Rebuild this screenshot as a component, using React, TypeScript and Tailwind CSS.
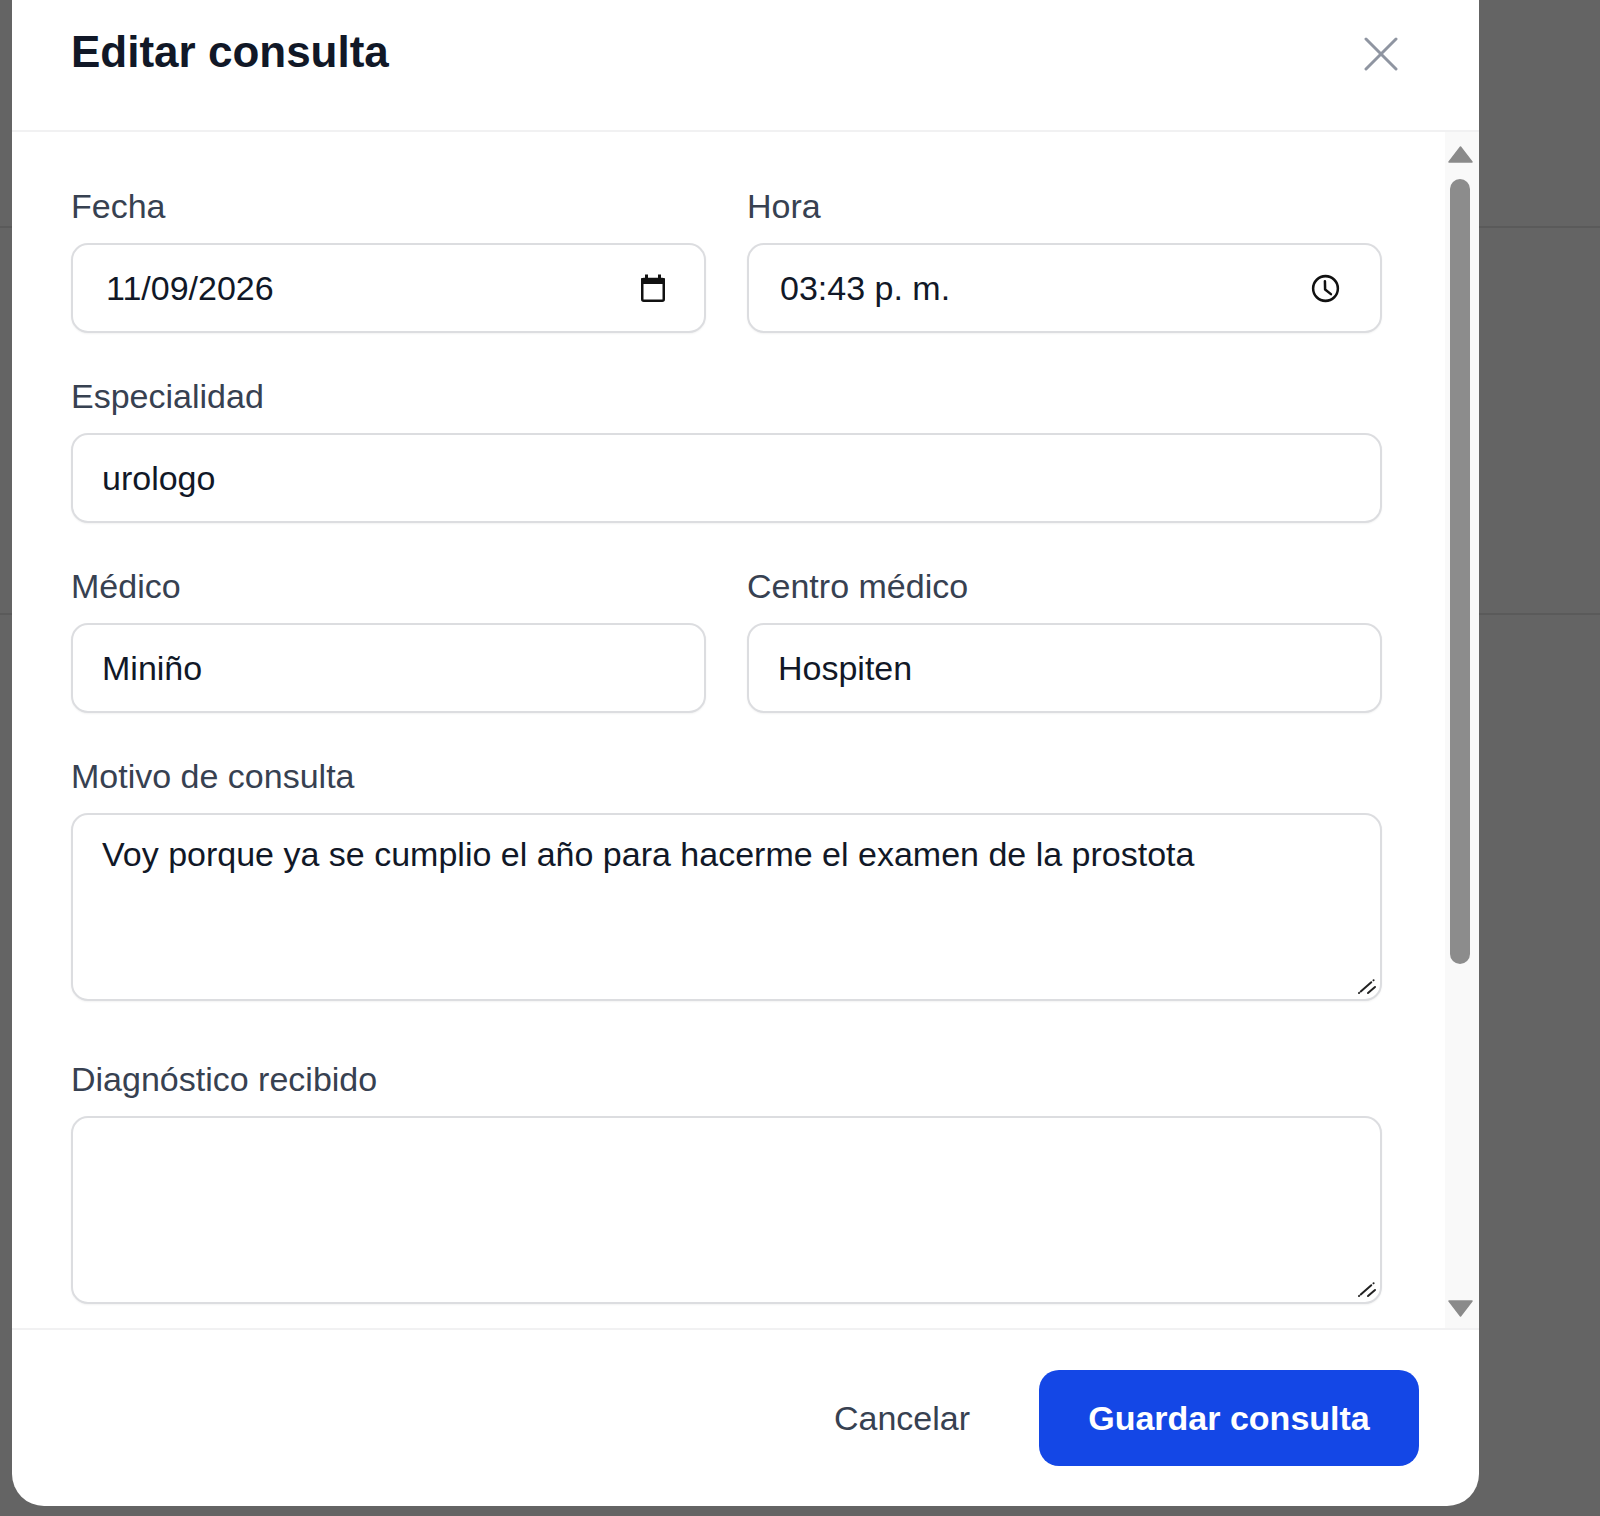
import React from "react";

const inputBase =
  "h-[90px] w-full rounded-[17px] border-2 border-[#dcdde0] bg-white text-[34px] text-[#111827] outline-none shadow-[0_1px_2px_rgba(0,0,0,0.05)]";

function Field({
  label,
  children,
  className = "",
}: {
  label: string;
  children: React.ReactNode;
  className?: string;
}) {
  return (
    <div className={"flex flex-col gap-[17px] " + className}>
      <label className="h-[40px] text-[34px] leading-[40px] text-[#374151]">{label}</label>
      {children}
    </div>
  );
}

function CalendarIcon() {
  return (
    <svg width="24" height="28" viewBox="0 0 24 28" className="shrink-0">
      <rect x="1.25" y="5" width="21.5" height="21.75" rx="1.5" fill="none" stroke="#111" strokeWidth="2.5" />
      <rect x="0" y="4" width="24" height="6" rx="1" fill="#111" />
      <rect x="4" y="0.5" width="3" height="5" fill="#111" />
      <rect x="17" y="0.5" width="3" height="5" fill="#111" />
    </svg>
  );
}

function ClockIcon() {
  return (
    <svg width="29" height="29" viewBox="0 0 30 30" className="shrink-0">
      <circle cx="15" cy="15" r="12.8" fill="none" stroke="#111" strokeWidth="2.6" />
      <polyline
        points="14.4,7.5 14.6,16 20.6,20.8"
        fill="none"
        stroke="#111"
        strokeWidth="2.6"
        strokeLinecap="round"
        strokeLinejoin="round"
      />
    </svg>
  );
}

function Grip() {
  return (
    <svg width="20" height="18" viewBox="0 0 20 18" className="pointer-events-none absolute bottom-[6px] right-[5px]">
      <line x1="2" y1="16" x2="18" y2="2" stroke="#222" strokeWidth="2" strokeLinecap="round" strokeDasharray="0.1 2.2 14 3" />
      <line x1="11" y1="16" x2="18" y2="10" stroke="#222" strokeWidth="2" strokeLinecap="round" />
    </svg>
  );
}

function TextArea({ value }: { value: string }) {
  return (
    <div className="relative">
      <textarea
        readOnly
        defaultValue={value}
        className="block h-[188px] w-full resize-none rounded-[17px] border-2 border-[#dcdde0] bg-white px-[29px] pt-[17px] text-[34px] leading-[44px] text-[#111827] outline-none shadow-[0_1px_2px_rgba(0,0,0,0.05)]"
      />
      <Grip />
    </div>
  );
}

export default function App() {
  return (
    <div className="relative h-[1516px] w-full overflow-hidden bg-[#646464] font-['Liberation_Sans',Arial,sans-serif]">
      {/* underlying dimmed page */}
      <div className="h-[228px] border-b-2 border-[#5a5a5a]" />
      <div className="h-[387px] border-b-2 border-[#5a5a5a]" />

      {/* modal */}
      <div className="absolute left-[12px] top-0 flex h-[1506px] w-[1467px] flex-col overflow-hidden rounded-b-[32px] bg-white">
        {/* header */}
        <div className="flex h-[132px] shrink-0 items-start justify-between border-b-2 border-[#f1f1f2] pl-[59px] pr-[81px] pt-[30px]">
          <h2 className="text-[44px] font-bold leading-[44px] text-[#111827]">Editar consulta</h2>
          <button className="mt-[7px] h-[34px] w-[34px]" aria-label="Cerrar">
            <svg width="34" height="34" viewBox="0 0 34 34">
              <line x1="2" y1="2" x2="32" y2="32" stroke="#8f95a1" strokeWidth="3" strokeLinecap="round" />
              <line x1="32" y1="2" x2="2" y2="32" stroke="#8f95a1" strokeWidth="3" strokeLinecap="round" />
            </svg>
          </button>
        </div>

        {/* body */}
        <div className="flex h-[1196px] shrink-0 overflow-hidden">
          <div className="flex flex-1 flex-col gap-[43px] pl-[59px] pr-[63px] pt-[54px]">
            <div className="grid grid-cols-2 gap-x-[41px]">
              <Field label="Fecha">
                <div className={inputBase + " flex items-center pl-[33px] pr-[39px]"}>
                  <span className="leading-[40px]">11/09/2026</span>
                  <span className="ml-auto flex">
                    <CalendarIcon />
                  </span>
                </div>
              </Field>
              <Field label="Hora">
                <div className={inputBase + " flex items-center pl-[31px] pr-[40px]"}>
                  <span className="leading-[40px]">03:43 p. m.</span>
                  <span className="ml-auto flex">
                    <ClockIcon />
                  </span>
                </div>
              </Field>
            </div>

            <Field label="Especialidad">
              <input readOnly defaultValue="urologo" className={inputBase + " px-[29px]"} />
            </Field>

            <div className="grid grid-cols-2 gap-x-[41px]">
              <Field label="Médico">
                <input readOnly defaultValue="Miniño" className={inputBase + " px-[29px]"} />
              </Field>
              <Field label="Centro médico">
                <input readOnly defaultValue="Hospiten" className={inputBase + " px-[29px]"} />
              </Field>
            </div>

            <Field label="Motivo de consulta">
              <TextArea value="Voy porque ya se cumplio el año para hacerme el examen de la prostota" />
            </Field>

            <Field label="Diagnóstico recibido" className="mt-[15px]">
              <TextArea value="" />
            </Field>
          </div>

          {/* scrollbar */}
          <div className="flex w-[34px] shrink-0 flex-col bg-[#f9f9f9]">
            <svg width="25" height="17" viewBox="0 0 25 17" className="ml-[3px] mt-[14px] shrink-0">
              <polygon points="12.5,1 24,16 1,16" fill="#8a8a8a" stroke="#8a8a8a" strokeWidth="1.5" strokeLinejoin="round" />
            </svg>
            <div className="ml-[5px] mt-[16px] h-[785px] w-[20px] shrink-0 rounded-full bg-[#8c8c8c]" />
            <div className="flex-1" />
            <svg width="25" height="17" viewBox="0 0 25 17" className="mb-[11px] ml-[3px] shrink-0">
              <polygon points="1,1 24,1 12.5,16" fill="#8a8a8a" stroke="#8a8a8a" strokeWidth="1.5" strokeLinejoin="round" />
            </svg>
          </div>
        </div>

        {/* footer */}
        <div className="flex h-[178px] shrink-0 items-center justify-end gap-[69px] border-t-2 border-[#f1f1f2] pr-[60px]">
          <button className="text-[34px] text-[#374151]">Cancelar</button>
          <button className="flex h-[96px] w-[380px] items-center justify-center rounded-[20px] bg-[#1447e6] text-[34px] font-bold text-white">
            Guardar consulta
          </button>
        </div>
      </div>
    </div>
  );
}
